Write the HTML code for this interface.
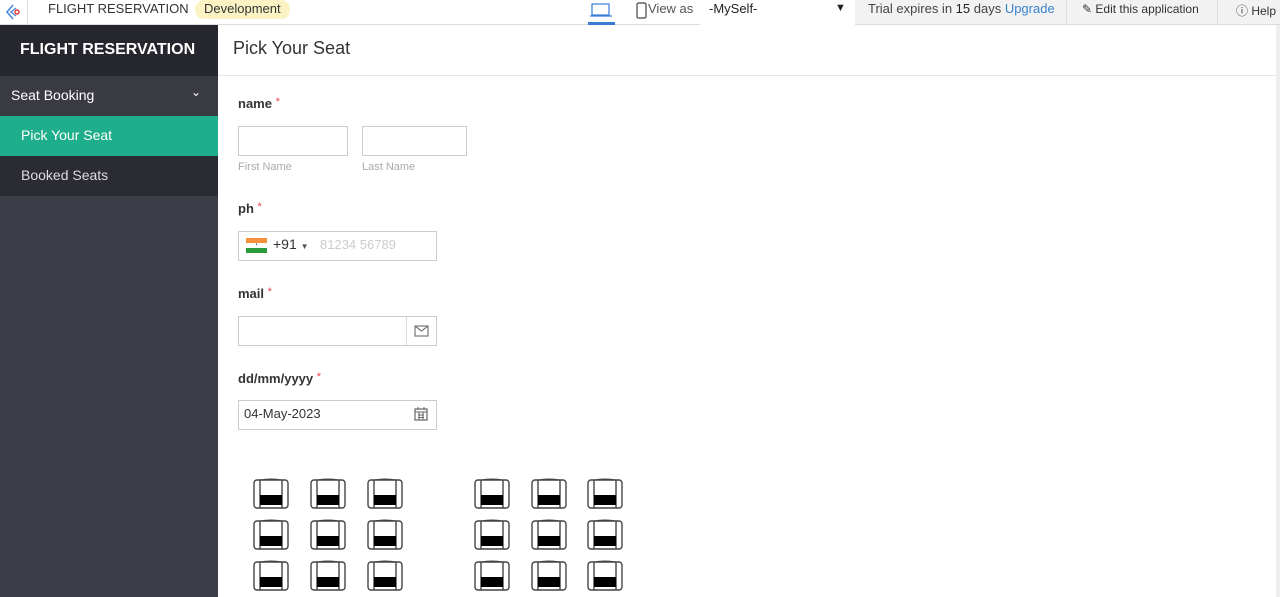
<!DOCTYPE html><html><head><style>
*{box-sizing:border-box;margin:0;padding:0}
body{width:1280px;height:597px;overflow:hidden;font-family:"Liberation Sans",sans-serif;background:#fff;position:relative;color:#333}
.a{position:absolute}
.top{left:0;top:0;width:1280px;height:25px;background:#fff;border-bottom:1px solid #ddd}
.inp{position:absolute;border:1px solid #ccc;background:#fff;height:30px}
.lbl{position:absolute;font-size:13px;color:#333;font-weight:bold}
.lbl b{color:#e44;font-weight:normal;font-size:11px;vertical-align:top}
.sub{position:absolute;font-size:11px;color:#aaa}
.seat{position:absolute;width:36px;height:31px}
</style></head><body>
<div class="a top"></div>
<svg class="a" style="left:4px;top:3px" width="18" height="18" viewBox="0 0 18 18"><path d="M9 2 3 9l6 7" fill="none" stroke="#4a8bd6" stroke-width="1.6"/><path d="M12 5 7 9l5 4" fill="none" stroke="#4a8bd6" stroke-width="1.4"/><circle cx="13" cy="9" r="2" fill="none" stroke="#e33" stroke-width="1.4"/></svg>
<div class="a" style="left:27px;top:0;width:1px;height:25px;background:#ddd"></div>
<div class="a" style="left:48px;top:1px;font-size:13px;color:#333">FLIGHT RESERVATION</div>
<div class="a" style="left:195px;top:0;height:19px;padding:1px 9px;background:#fbf3c4;border-radius:9px;font-size:13px;color:#333">Development</div>
<svg class="a" style="left:589px;top:2px" width="24" height="16"><rect x="3" y="2" width="17" height="11" fill="none" stroke="#3a7bd5" stroke-width="1.2"/><path d="M1 14h22" stroke="#3a7bd5" stroke-width="1.2"/></svg>
<div class="a" style="left:588px;top:22px;width:27px;height:3px;background:#3a7bd5"></div>
<svg class="a" style="left:636px;top:2px" width="12" height="17"><rect x="1" y="1" width="9" height="15" rx="1.5" fill="none" stroke="#444" stroke-width="1.2"/></svg>
<div class="a" style="left:648px;top:1px;font-size:13px;color:#555">View as</div>
<div class="a" style="left:700px;top:0;width:155px;height:25px;background:#fff"></div>
<div class="a" style="left:709px;top:1px;font-size:13px;color:#222">-MySelf-</div>
<div class="a" style="left:835px;top:2px;font-size:11px;color:#222">▼</div>
<div class="a" style="left:855px;top:0;width:425px;height:25px;background:#f2f2f2;border-bottom:1px solid #ddd"></div>
<div class="a" style="left:868px;top:1px;font-size:13px;color:#444">Trial expires in <span style="color:#222">15</span> days <span style="color:#3a83d0">Upgrade</span></div>
<div class="a" style="left:1066px;top:0;width:1px;height:25px;background:#ddd"></div>
<div class="a" style="left:1082px;top:2px;font-size:12px;color:#333">✎ Edit this application</div>
<div class="a" style="left:1217px;top:0;width:1px;height:25px;background:#ddd"></div>
<div class="a" style="left:1236px;top:2px;font-size:12px;color:#333">ⓘ Help</div>

<div class="a" style="left:0;top:25px;width:218px;height:572px;background:#3d3d47"></div>
<div class="a" style="left:0;top:25px;width:218px;height:51px;background:#26262e;color:#fff;font-size:16px;font-weight:bold;padding:16px 0 0 20px">FLIGHT RESERVATION</div>
<div class="a" style="left:0;top:76px;width:218px;height:40px;background:#3a3a43;color:#fff;font-size:14px;padding:11px 0 0 11px">Seat Booking<span style="position:absolute;left:191px;top:9px;font-size:12px">⌄</span></div>
<div class="a" style="left:0;top:116px;width:218px;height:40px;background:#1eae8b;color:#fff;font-size:14px;padding:11px 0 0 21px">Pick Your Seat</div>
<div class="a" style="left:0;top:156px;width:218px;height:40px;background:#2b2b33;color:#ddd;font-size:14px;padding:11px 0 0 21px">Booked Seats</div>

<div class="a" style="left:218px;top:25px;width:1062px;height:51px;border-bottom:1px solid #e5e5e5"></div>
<div class="a" style="left:233px;top:38px;font-size:18px;color:#333">Pick Your Seat</div>
<div class="a" style="left:1276px;top:25px;width:4px;height:572px;background:#eee"></div>

<div class="lbl" style="left:238px;top:96px">name <b>*</b></div>
<div class="inp" style="left:238px;top:126px;width:110px"></div>
<div class="inp" style="left:362px;top:126px;width:105px"></div>
<div class="sub" style="left:238px;top:161px">First Name</div>
<div class="sub" style="left:362px;top:161px">Last Name</div>
<div class="lbl" style="left:238px;top:201px">ph <b>*</b></div>
<div class="inp" style="left:238px;top:231px;width:199px"></div>
<div class="a" style="left:246px;top:238px;width:21px;height:15px"><div style="height:5px;background:#f4913a"></div><div style="height:5px;background:#fff;text-align:center;font-size:5px;line-height:5px;color:#226">•</div><div style="height:5px;background:#2a9a3a"></div></div>
<div class="a" style="left:273px;top:236px;font-size:14px;color:#333">+91 <span style="font-size:8px;color:#555">▼</span></div>
<div class="a" style="left:320px;top:237px;font-size:13px;color:#ccc">81234 56789</div>
<div class="lbl" style="left:238px;top:286px">mail <b>*</b></div>
<div class="inp" style="left:238px;top:316px;width:199px"></div>
<div class="a" style="left:406px;top:317px;width:1px;height:28px;background:#ddd"></div>
<svg class="a" style="left:414px;top:325px" width="15" height="12"><rect x="1" y="1" width="13" height="10" fill="none" stroke="#777" stroke-width="1.2"/><path d="M1 1l6.5 5 6.5-5" fill="none" stroke="#777" stroke-width="1.2"/></svg>
<div class="lbl" style="left:238px;top:371px">dd/mm/yyyy <b>*</b></div>
<div class="inp" style="left:238px;top:400px;width:199px"></div>
<div class="a" style="left:244px;top:406px;font-size:13px;color:#333">04-May-2023</div>
<svg class="a" style="left:414px;top:407px" width="14" height="14"><rect x="1" y="2" width="12" height="11" fill="none" stroke="#666" stroke-width="1.2"/><path d="M1 5h12M4 8h6M4 10.5h6M5 5v8M9 5v8M4 0v3M10 0v3" stroke="#666"/></svg>

<svg width="0" height="0" style="position:absolute"><defs><symbol id="s" viewBox="0 0 36 31"><rect x="1" y="2" width="34" height="28" rx="3" fill="#fff" stroke="#444" stroke-width="1.4"/><path d="M7 2v28M29 2v28" stroke="#444" stroke-width="1.4"/><path d="M7 2q11-2 22 0" fill="none" stroke="#444"/><rect x="7" y="17" width="22" height="10" fill="#000"/></symbol></defs></svg>
<svg class="seat" style="left:253px;top:478px"><use href="#s"/></svg>
<svg class="seat" style="left:310px;top:478px"><use href="#s"/></svg>
<svg class="seat" style="left:367px;top:478px"><use href="#s"/></svg>
<svg class="seat" style="left:474px;top:478px"><use href="#s"/></svg>
<svg class="seat" style="left:531px;top:478px"><use href="#s"/></svg>
<svg class="seat" style="left:587px;top:478px"><use href="#s"/></svg>
<svg class="seat" style="left:253px;top:519px"><use href="#s"/></svg>
<svg class="seat" style="left:310px;top:519px"><use href="#s"/></svg>
<svg class="seat" style="left:367px;top:519px"><use href="#s"/></svg>
<svg class="seat" style="left:474px;top:519px"><use href="#s"/></svg>
<svg class="seat" style="left:531px;top:519px"><use href="#s"/></svg>
<svg class="seat" style="left:587px;top:519px"><use href="#s"/></svg>
<svg class="seat" style="left:253px;top:560px"><use href="#s"/></svg>
<svg class="seat" style="left:310px;top:560px"><use href="#s"/></svg>
<svg class="seat" style="left:367px;top:560px"><use href="#s"/></svg>
<svg class="seat" style="left:474px;top:560px"><use href="#s"/></svg>
<svg class="seat" style="left:531px;top:560px"><use href="#s"/></svg>
<svg class="seat" style="left:587px;top:560px"><use href="#s"/></svg>
</body></html>
